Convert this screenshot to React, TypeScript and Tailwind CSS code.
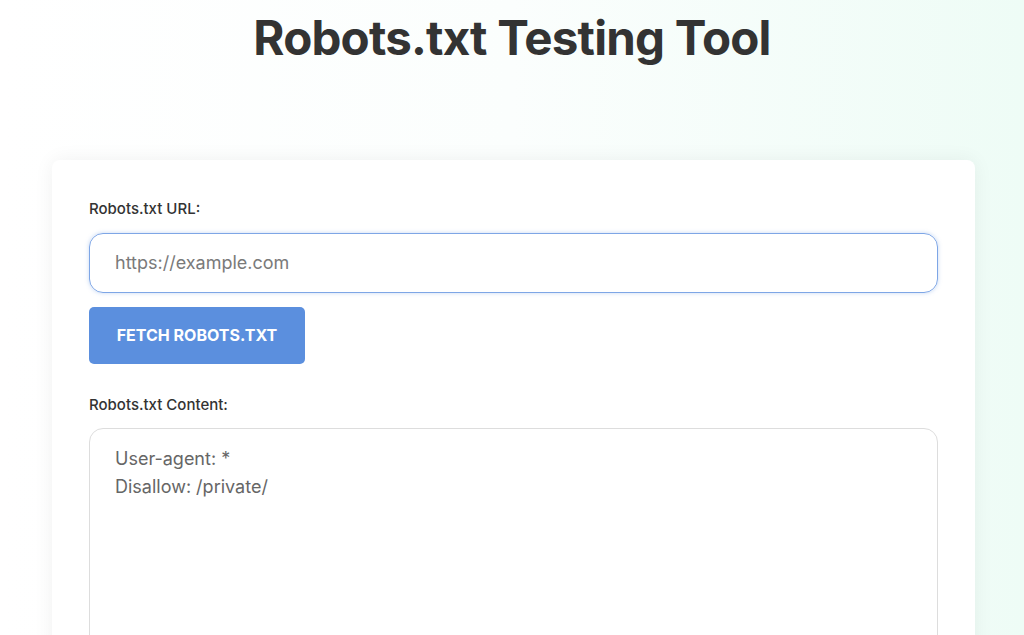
export default function App() {
  return (
    <div
      className="h-[635px] w-full overflow-hidden bg-gradient-to-r from-white via-[#fbfefd] to-[#eefcf6]"
      style={{ fontFamily: 'Inter, "Open Sans", sans-serif' }}
    >
      <h1 className="pt-[10px] text-center text-[47.5px] font-bold leading-[56px] tracking-[-0.8px] text-[#333333]">
        Robots.txt Testing Tool
      </h1>
      <div className="ml-[52px] mr-[49px] mt-[94px] h-[600px] rounded-lg bg-white px-[37px] pt-[38px] shadow-[0_0_20px_rgba(0,0,0,0.06)]">
        <label className="block text-[15px] font-medium text-[#333333]">Robots.txt URL:</label>
        <input
          placeholder="https://example.com"
          className="mt-[12px] block h-[60px] w-full rounded-[14px] border border-[#7ea6e6] px-[25px] text-[18px] text-[#555] shadow-[0_0_4px_rgba(91,143,222,0.35)] outline-none placeholder:text-[#7a7a7a]"
        />
        <button className="mt-[14px] h-[57px] w-[216px] rounded-[5px] bg-[#5b8fde] text-[16px] font-bold uppercase text-white">
          Fetch Robots.txt
        </button>
        <label className="mt-[30px] block text-[15px] font-medium text-[#333333]">Robots.txt Content:</label>
        <textarea
          defaultValue={'User-agent: *\nDisallow: /private/'}
          className="mt-[12px] block h-[260px] w-full resize-none rounded-[14px] border border-[#dddddd] px-[25px] pt-[16px] text-[18px] leading-[28px] text-[#666] outline-none"
        />
      </div>
    </div>
  );
}
